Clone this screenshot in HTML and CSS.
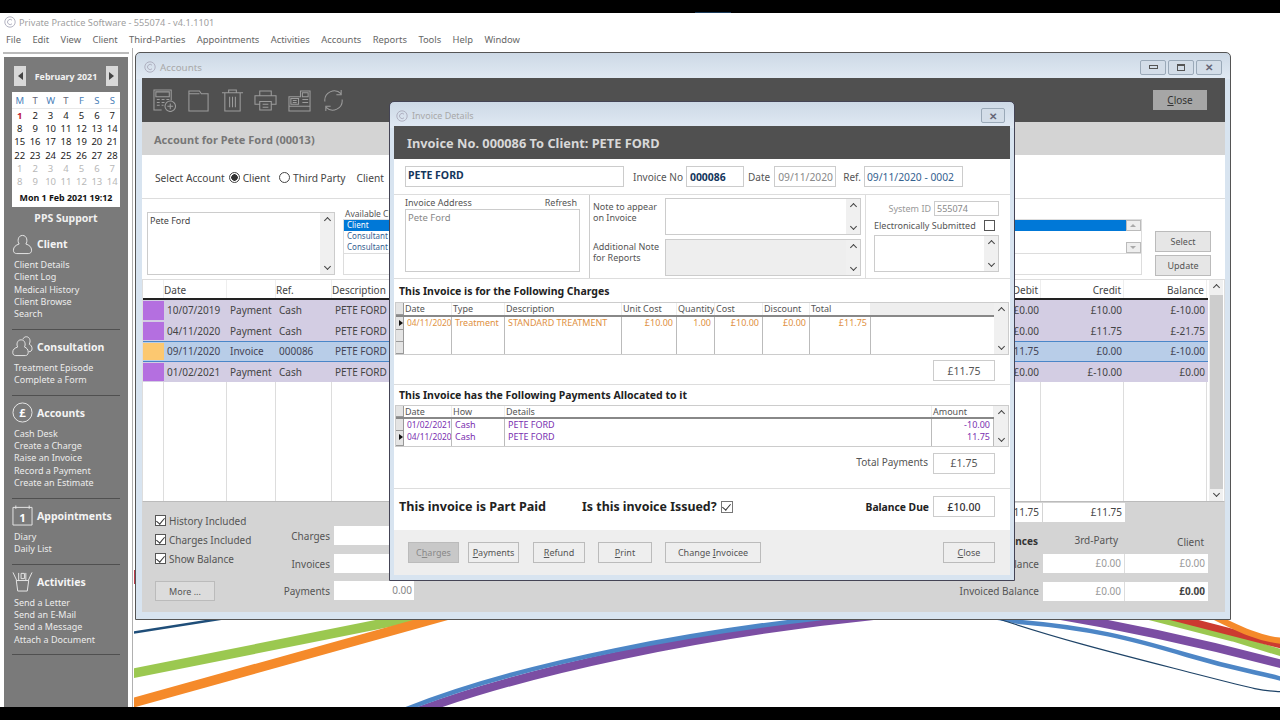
FILE: index.html
```html
<!DOCTYPE html>
<html lang="en">
<head>
<meta charset="utf-8">
<title>Private Practice Software</title>
<link rel="stylesheet" href="styles.css">
</head>
<body>
<div class="blackbar"><span class="blip"></span></div>
<div class="screen">
  <div class="apptitle">
    <svg class="logo" viewBox="0 0 12 12"><circle cx="6" cy="6" r="5.2"/><path d="M8 4.2A2.6 2.6 0 1 0 8 7.8"/></svg>
    <span>Private Practice Software - 555074 - v4.1.1101</span>
  </div>
  <div class="menu">
    <span>File</span><span>Edit</span><span>View</span><span>Client</span><span>Third-Parties</span><span>Appointments</span><span>Activities</span><span>Accounts</span><span>Reports</span><span>Tools</span><span>Help</span><span>Window</span>
  </div>
  <div class="desk">
    <aside class="side">
      <div class="side-in">
        <div class="calnav">
          <span class="navbtn"><i class="tri-l"></i></span>
          <b>February 2021</b>
          <span class="navbtn"><i class="tri-r"></i></span>
        </div>
        <div class="cal">
          <div class="calhead"><span>M</span><span>T</span><span>W</span><span>T</span><span>F</span><span>S</span><span>S</span></div>
          <div class="caldays">
            <span class="red">1</span><span>2</span><span>3</span><span>4</span><span>5</span><span>6</span><span>7</span>
            <span>8</span><span>9</span><span>10</span><span>11</span><span>12</span><span>13</span><span>14</span>
            <span>15</span><span>16</span><span>17</span><span>18</span><span>19</span><span>20</span><span>21</span>
            <span>22</span><span>23</span><span>24</span><span>25</span><span>26</span><span>27</span><span>28</span>
            <span class="off">1</span><span class="off">2</span><span class="off">3</span><span class="off">4</span><span class="off">5</span><span class="off">6</span><span class="off">7</span>
            <span class="off">8</span><span class="off">9</span><span class="off">10</span><span class="off">11</span><span class="off">12</span><span class="off">13</span><span class="off">14</span>
          </div>
          <div class="calfoot">Mon 1 Feb 2021 19:12</div>
        </div>
        <div class="pps">PPS Support</div>
        <section class="sec first">
          <h3><svg viewBox="0 0 22 22"><path d="M7.5 10.5C5.5 8 6 1.500 11 1.500S16.500 8 14.500 10.500C18 11.500 20.500 13.500 20.500 17C20.500 19.500 19 20.500 17 20.500H5C3 20.500 1.500 19.500 1.500 17C1.500 13.500 4 11.500 7.500 10.500Z"/></svg>Client</h3>
          <a>Client Details</a><a>Client Log</a><a>Medical History</a><a>Client Browse</a><a>Search</a>
        </section>
        <section class="sec">
          <h3><svg viewBox="0 0 22 22"><path d="M6 11.500C4.500 9.500 5 4 9.500 4S14.500 9.500 13 11.500C15.500 12.500 17 14 17 17C17 19.500 15.500 20.500 14 20.500H4C2 20.500 .8 19.500 .8 17C.8 14 3 12.500 6 11.500Z"/><path d="M11.500 3.500C12 1.500 13.500 .8 15 .8C19 .8 19.800 6 18 8.500C20 9.500 21 11 21 13.500C21 15.500 19.500 16.500 17.500 16.500"/></svg>Consultation</h3>
          <a>Treatment Episode</a><a>Complete a Form</a>
        </section>
        <section class="sec">
          <h3><svg viewBox="0 0 22 22"><circle cx="11" cy="11" r="10"/><text x="11" y="15.500" text-anchor="middle" class="glyph">£</text></svg>Accounts</h3>
          <a>Cash Desk</a><a>Create a Charge</a><a>Raise an Invoice</a><a>Record a Payment</a><a>Create an Estimate</a>
        </section>
        <section class="sec">
          <h3><svg viewBox="0 0 22 22"><path d="M1 2.500H21V21H1ZM4 .5V4M18 .5V4"/><text x="11" y="17.500" text-anchor="middle" class="glyph">1</text></svg>Appointments</h3>
          <a>Diary</a><a>Daily List</a>
        </section>
        <section class="sec">
          <h3><svg viewBox="0 0 22 22"><path d="M4.500 10H17.500L16 21H6ZM1 1.500L5 10M21 1.500L17 10M7 2V10M9.500 2.500H13V8H9.500ZM14.500 2V10"/></svg>Activities</h3>
          <a>Send a Letter</a><a>Send an E-Mail</a><a>Send a Message</a><a>Attach a Document</a>
        </section>
      </div>
    </aside>

    <main class="canvas">
      <svg class="swoosh" viewBox="134 48 1146 659" preserveAspectRatio="none">
        <rect x="134" y="570" width="2" height="14" fill="#c04050"/>
        <path d="M125 634L245 615" stroke="#1f4e79" stroke-width="2.500" fill="none"/>
        <path d="M125 675L440 612" stroke="#9bc850" stroke-width="9.500" fill="none"/>
        <path d="M125 705L470 609" stroke="#f58a2a" stroke-width="9.500" fill="none"/>
        <path d="M1140 614L1233 638L1285 654" stroke="#9bc850" stroke-width="7" fill="none"/>
        <path d="M1165 615L1285 646" stroke="#cc3a30" stroke-width="7" fill="none"/>
        <path d="M1205 612C1240 630 1262 640 1285 641" stroke="#f58a2a" stroke-width="6" fill="none"/>
        <path d="M408 715C525 670 710 632 880 615C960 610 1000 612 1040 612C1100 622 1180 637 1285 665" stroke="#7b4ea3" stroke-width="8.500" fill="none"/>
        <path d="M392 715C512 664 704 628 880 612C960 608 1000 618 1020 622C1090 628 1130 638 1187 655S1260 672 1285 680" stroke="#4d86c6" stroke-width="4.500" fill="none"/>
        <path d="M990 616C1060 640 1130 657 1200 675S1260 690 1285 692" stroke="#1f4468" stroke-width="1.200" fill="none"/>
      </svg>

      <div class="win acc">
        <div class="wtitle">
          <svg class="logo" viewBox="0 0 12 12"><circle cx="6" cy="6" r="5.2"/><path d="M8 4.200A2.600 2.600 0 1 0 8 7.800"/></svg>
          <span class="wname">Accounts</span>
          <span class="wctl"><span class="wbtn"><i class="ic-min"></i></span><span class="wbtn"><i class="ic-max"></i></span><span class="wbtn x">✕</span></span>
        </div>
        <div class="wbody">
          <div class="toolbar">
            <svg viewBox="0 0 24 24"><path d="M9 22H1V1H19V12"/><path d="M3 3H17V8H3ZM4 11H7M9 11H12M14 11H17M4 14H7M9 14H12M4 17H7M9 17H11"/><circle cx="18" cy="18" r="5.500"/><path d="M18 15V21M15 18H21"/></svg>
            <svg viewBox="0 0 24 24"><path d="M2 2H13L15 5H22V23H2ZM2 5H13"/></svg>
            <svg viewBox="0 0 24 24"><path d="M1 4H23M8 4V1H16V4M4 4V23H20V4M9 8V19M12 8V19M15 8V19"/></svg>
            <svg viewBox="0 0 24 24"><path d="M6 7V2H18V7M6 16H1V7H23V16H18M6 13H18V22H6ZM9 16H15M9 19H15"/></svg>
            <svg viewBox="0 0 24 24"><path d="M1 8H13V2H23V23H1ZM1 18H23M3 10H11V16H3ZM15 4H21V8H15ZM5 12H9M5 14H9M15 11H21M15 14H21"/></svg>
            <svg viewBox="0 0 24 24"><path d="M3 13C2 4 13 -2 20 5M21 11C22 20 11 26 4 19M20 1V6H15M4 23V18H9"/></svg>
            <span class="closebtn"><span><u>C</u>lose</span></span>
          </div>
          <div class="acchead">Account for Pete Ford (00013)</div>
          <div class="selrow">
            <span>Select Account</span>
            <span class="radio on"></span><span>Client</span>
            <span class="radio"></span><span>Third Party</span>
            <span class="sel-client">Client</span>
          </div>
          <div class="addr">
            <div class="box addrbox">
              <div class="boxtext">Pete Ford</div>
              <div class="sb"><i class="up"></i><i class="dn"></i></div>
            </div>
            <div class="avail">
              <div class="avlabel">Available Clients</div>
              <div class="avlist">
                <div class="avrows"><div class="av sel">Client</div><div class="av">Consultant</div><div class="av">Consultant</div></div>
                <div class="avsb"><span class="tri-up"></span><span class="tri-dn"></span></div>
              </div>
              <div class="avextra"></div>
            </div>
            <div class="addrbtns"><span class="btn">Select</span><span class="btn">Update</span></div>
          </div>
          <div class="ledger">
            <div class="ltable">
              <div class="lrow lhead"><span></span><span>Date</span><span></span><span>Ref.</span><span>Description</span><span class="r">Debit</span><span class="r">Credit</span><span class="r">Balance</span></div>
              <div class="lrow pay"><i class="sw"></i><span>10/07/2019</span><span>Payment</span><span>Cash</span><span>PETE FORD</span><span class="r">£0.00</span><span class="r">£10.00</span><span class="r">£-10.00</span></div>
              <div class="lrow pay"><i class="sw"></i><span>04/11/2020</span><span>Payment</span><span>Cash</span><span>PETE FORD</span><span class="r">£0.00</span><span class="r">£11.75</span><span class="r">£-21.75</span></div>
              <div class="lrow cur"><i class="sw inv"></i><span>09/11/2020</span><span>Invoice</span><span>000086</span><span>PETE FORD</span><span class="r">£11.75</span><span class="r">£0.00</span><span class="r">£-10.00</span></div>
              <div class="lrow pay"><i class="sw"></i><span>01/02/2021</span><span>Payment</span><span>Cash</span><span>PETE FORD</span><span class="r">£0.00</span><span class="r">£-10.00</span><span class="r">£0.00</span></div>
              <div class="lrow fill"><span></span><span></span><span></span><span></span><span></span><span></span><span></span><span></span></div>
            </div>
            <div class="lsb"><i class="up"></i><b></b><i class="dn"></i></div>
          </div>
          <div class="foot">
            <div class="fchecks">
              <label class="chk"><i class="cb on"></i>History Included</label>
              <label class="chk"><i class="cb on"></i>Charges Included</label>
              <label class="chk"><i class="cb on"></i>Show Balance</label>
              <span class="btn more">More ...</span>
            </div>
            <div class="fmid">
              <div class="frow"><label>Charges</label><span class="fin"></span></div>
              <div class="frow"><label>Invoices</label><span class="fin"></span></div>
              <div class="frow"><label>Payments</label><span class="fin">0.00</span></div>
            </div>
            <div class="fright">
              <div class="ftot"><span class="fin strong">£11.75</span><span class="fin strong">£11.75</span></div>
              <div class="fhdr"><b>Balances</b><span class="th">3rd-Party</span><span class="th low">Client</span></div>
              <div class="frow"><label>Balance</label><span class="fin grey">£0.00</span><span class="fin grey">£0.00</span></div>
              <div class="frow"><label>Invoiced Balance</label><span class="fin grey">£0.00</span><span class="fin strong"><b>£0.00</b></span></div>
            </div>
          </div>
        </div>
      </div>

      <div class="win dlg">
        <div class="wtitle dt">
          <svg class="logo" viewBox="0 0 12 12"><circle cx="6" cy="6" r="5.200"/><path d="M8 4.200A2.600 2.600 0 1 0 8 7.800"/></svg>
          <span class="wname small">Invoice Details</span>
          <span class="wctl"><span class="wbtn x">✕</span></span>
        </div>
        <div class="wbody">
          <div class="dhead">Invoice No. 000086 To Client: PETE FORD</div>
          <div class="drow1">
            <span class="inp name">PETE FORD</span>
            <label>Invoice No</label><span class="inp invno">000086</span>
            <label>Date</label><span class="inp date">09/11/2020</span>
            <label>Ref.</label><span class="inp ref">09/11/2020 - 0002</span>
          </div>
          <div class="drow2">
            <div class="dcol a">
              <div class="alabel"><span>Invoice Address</span><span>Refresh</span></div>
              <div class="inp aaddr">Pete Ford</div>
            </div>
            <div class="dcol b">
              <div class="note"><label>Note to appear<br>on Invoice</label><div class="inp nbox"><div class="sb"><i class="up"></i><i class="dn"></i></div></div></div>
              <div class="note two"><label>Additional Note<br>for Reports</label><div class="inp nbox dis"><div class="sb"><i class="up"></i><i class="dn"></i></div></div></div>
            </div>
            <div class="dcol c">
              <div class="sysrow"><label>System ID</label><span class="inp sysid">555074</span></div>
              <div class="elec"><label>Electronically Submitted</label><i class="cb"></i></div>
              <div class="inp ebox"><div class="sb"><i class="up"></i><i class="dn"></i></div></div>
            </div>
          </div>
          <h4 class="dsec">This Invoice is for the Following Charges</h4>
          <div class="dg g1">
            <div class="dgmain">
              <div class="dr hd"><i class="rs"></i><span>Date</span><span>Type</span><span>Description</span><span>Unit Cost</span><span>Quantity</span><span>Cost</span><span>Discount</span><span>Total</span><em></em></div>
              <div class="dr or"><i class="rs ptr"></i><span>04/11/2020</span><span>Treatment</span><span>STANDARD TREATMENT</span><span class="r">£10.00</span><span class="r">1.00</span><span class="r">£10.00</span><span class="r">£0.00</span><span class="r">£11.75</span><em></em></div>
              <div class="dr"><i class="rs"></i><span></span><span></span><span></span><span></span><span></span><span></span><span></span><span></span><em></em></div>
              <div class="dr"><i class="rs"></i><span></span><span></span><span></span><span></span><span></span><span></span><span></span><span></span><em></em></div>
            </div>
            <div class="sb"><i class="up"></i><i class="dn"></i></div>
          </div>
          <div class="dtotal one"><span class="inp amt">£11.75</span></div>
          <h4 class="dsec two">This Invoice has the Following Payments Allocated to it</h4>
          <div class="dg g2">
            <div class="dgmain">
              <div class="dr hd"><i class="rs"></i><span>Date</span><span>How</span><span>Details</span><span>Amount</span></div>
              <div class="dr pu"><i class="rs"></i><span>01/02/2021</span><span>Cash</span><span>PETE FORD</span><span class="r">-10.00</span></div>
              <div class="dr pu"><i class="rs ptr"></i><span>04/11/2020</span><span>Cash</span><span>PETE FORD</span><span class="r">11.75</span></div>
            </div>
            <div class="sb"><i class="up"></i><i class="dn"></i></div>
          </div>
          <div class="dtotal pays"><label>Total Payments</label><span class="inp amt">£1.75</span></div>
          <div class="dstatus">
            <b class="paid">This invoice is Part Paid</b>
            <b class="issued">Is this invoice Issued?</b><i class="cb on small"></i>
            <b class="due">Balance Due</b><span class="inp amt strong">£10.00</span>
          </div>
          <div class="dbar">
            <span class="btn off w51"><span>C<u>h</u>arges</span></span>
            <span class="btn w51 ml9"><span><u>P</u>ayments</span></span>
            <span class="btn w52 ml14"><span><u>R</u>efund</span></span>
            <span class="btn w54 ml13"><span><u>P</u>rint</span></span>
            <span class="btn w96 ml13"><span>Change <u>I</u>nvoicee</span></span>
            <span class="btn w52 last"><span><u>C</u>lose</span></span>
          </div>
        </div>
      </div>
    </main>
  </div>
</div>
<div class="blackbar"></div>
</body>
</html>
```
FILE: styles.css
```css
*{box-sizing:border-box}
html,body{margin:0;height:720px;overflow:hidden;background:#000}
body{font-family:"Noto Sans","Open Sans",sans-serif;font-size:10px;color:#555;display:flex;flex-direction:column}
.blackbar{height:13px;background:#000;position:relative;flex:none}
.blip{display:block;position:absolute;left:695px;bottom:0;width:36px;height:1px;background:#1a3a5a}
.screen{height:694px;background:#fff;display:flex;flex-direction:column;flex:none}
.apptitle{height:18px;display:flex;align-items:center;gap:3px;padding-left:4px;color:#a0a0a0;font-size:9.2px;flex:none}
.logo{width:12px;height:12px;fill:none;stroke:#aab;stroke-width:.9;flex:none}
.menu{height:17px;display:flex;gap:11.4px;padding-left:6px;align-items:center;color:#666;font-size:9.4px;flex:none}
.desk{flex:1;display:flex;min-height:0}

/* sidebar */
.side{width:133px;padding:5px 4px 0;border-right:1px solid #b0b0b0;flex:none;position:relative;margin-right:-3px;border-top:0}
.side::before{content:"";display:block;height:2px;background:#bbb;margin:-1px -1px 3px}
.side-in{background:#7a7a7a;height:100%;width:124px;padding:0 8px;color:#eee}
.calnav{display:flex;align-items:center;justify-content:space-between;padding:9px 2px 6px;height:35px}
.calnav b{color:#f2f2f2;font-size:8.9px}
.navbtn{width:12px;height:20px;background:#d8d8d8;display:flex;align-items:center;justify-content:center}
.tri-l,.tri-r{width:0;height:0;border:4px solid transparent}
.tri-l{border-right:5px solid #444;border-left:0}
.tri-r{border-left:5px solid #444;border-right:0}
.cal{background:#fff;width:108px;height:115px;color:#222;font-size:9.5px}
.calhead{display:grid;grid-template-columns:repeat(7,1fr);height:17px;align-items:center;text-align:center;color:#4a80b8;border-bottom:1px solid #e8e8e8}
.calhead span:nth-child(2),.calhead span:nth-child(4){color:#667}
.caldays{display:grid;grid-template-columns:repeat(7,1fr);grid-auto-rows:13.2px;text-align:center;line-height:13px}
.red{color:#c0203a;font-weight:700}
.off{color:#b8b8b8}
.calfoot{font-weight:700;font-size:8.9px;text-align:center;height:19px;line-height:19px;color:#111}
.pps{color:#f0f0f0;font-weight:700;font-size:10.5px;text-align:center;height:26px;line-height:22px}
.sec{border-bottom:1px solid #505050;padding:6px 0 8.400px;margin:0;width:108px;box-sizing:content-box}
.sec.first{padding-top:0;border-bottom-width:1px}
.sec h3{margin:0 0 4px;height:22px;display:flex;align-items:center;gap:4px;color:#f4f4f4;font-size:10.5px;font-weight:700}
.sec svg{width:21px;height:21px;fill:none;stroke:#e8e8e8;stroke-width:1;flex:none}
.glyph{font-size:12px;font-weight:700;fill:#fff;stroke:none}
.sec a{display:block;font-size:9px;line-height:12.300px;color:#ececec;padding-left:2px}

/* canvas */
.canvas{flex:1;position:relative;min-width:0}
.swoosh{position:absolute;left:4px;top:0;width:1146px;height:100%}
.win{position:absolute;background:linear-gradient(#cdd9e6,#e0e9f3 26px,#d8e4f0 26px);border:1px solid #555;border-bottom-width:1px;border-radius:5px 5px 0 0;display:flex;flex-direction:column}
.acc{left:5px;top:4px;width:1096px;height:568px;padding:0 5px 7px 6px}
.dlg{left:259px;top:53px;width:626px;height:480px;padding:0 4px 5px;border-color:#445;z-index:2}
.wtitle{height:25px;display:flex;align-items:center;gap:4px;padding:3px 0 0 2px;flex:none}
.dt{height:24px}
.wname{color:#a8a8a8;font-size:9.800px}
.wname.small{font-size:9px}
.wctl{margin-left:auto;display:flex;gap:2px;padding-right:3px}
.wbtn{width:26px;height:15px;border:1px solid #9aa9b8;background:#d3dde8;border-radius:2px;display:flex;align-items:center;justify-content:center;color:#667;font-size:10px;font-weight:700}
.wbtn.x{width:26px}
.dt .wctl{padding-right:5px}
.dt .wbtn.x{width:24px}
.ic-min{width:9px;height:4px;border:1px solid #555}
.ic-max{width:8px;height:7px;border:1px solid #555;border-top-width:2px}
.wbody{flex:1;background:#fff;display:flex;flex-direction:column;min-height:0}

/* accounts */
.toolbar{height:44px;background:#505050;display:flex;align-items:center;padding-left:11px;gap:10.800px;flex:none}
.toolbar svg{width:23px;height:23px;fill:none;stroke:#9c9c9c;stroke-width:1.100;flex:none}
.closebtn{margin-left:auto;margin-right:18px;width:54px;height:20px;background:#a6a6a6;color:#333;font-size:10px;display:flex;align-items:center;justify-content:center}
.acchead{height:33px;background:#d4d4d4;color:#777;font-weight:700;font-size:11px;line-height:36px;padding-left:12px;flex:none}
.selrow{height:44px;display:flex;align-items:center;padding:2px 0 0 13px;border-bottom:1px solid #ddd;font-size:10.200px;flex:none;color:#444}
.radio{width:11px;height:11px;border:1px solid #444;border-radius:50%;margin:0 3px 0 4px;background:#fff;flex:none}
.radio+span+.radio{margin-left:9px}
.radio.on{background:radial-gradient(circle,#333 3px,#fff 3.500px)}
.sel-client{margin-left:11px}
.addr{height:80px;display:flex;flex:none;position:relative}
.box{border:1px solid #ccc;background:#fff;display:flex}
.addrbox{width:188px;height:63px;margin:13px 0 0 5px}
.boxtext{flex:1;padding:1px 2px;font-size:9px;color:#444}
.sb{width:14px;background:#f0f0f0;display:flex;flex-direction:column;justify-content:space-between;align-items:center;padding:5px 0;flex:none}
.up,.dn{display:block;width:5px;height:5px;border:solid #444;border-width:1.200px 0 0 1.200px;transform:rotate(45deg);flex:none}
.dn{transform:rotate(225deg)}
.avail{margin-left:8px;width:799px;padding-top:9px}
.avlabel{font-size:8.500px;height:11px;line-height:11px;color:#555;padding-left:2px}
.avlist{height:35px;border:1px solid #ddd;display:flex}
.avrows{flex:1;padding-top:0;font-size:8px;line-height:10.800px;color:#35618f}
.av{padding-left:3px;height:10.800px}
.av.sel{background:#0078d7;color:#fff}
.avsb{width:15px;display:flex;flex-direction:column;justify-content:space-between;background:#fff}
.avsb span{height:11px;background:#eee;border:1px solid #bbb;position:relative}
.tri-up::after,.tri-dn::after{content:"";position:absolute;left:3px;top:3px;border:3.500px solid transparent}
.tri-up::after{border-bottom:3.500px solid #aaa;border-top:0}
.tri-dn::after{border-top:3.500px solid #aaa;border-bottom:0}
.avextra{height:21px;border:1px solid #ddd;border-top:0}
.addrbtns{margin-left:13px;padding-top:32px;display:flex;flex-direction:column;gap:3px}
.btn{background:#e6e6e6;border:1px solid #bbb;display:flex;align-items:center;justify-content:center;color:#555;font-size:9px;height:21px;flex:none}
.addrbtns .btn{width:56px}
.ledger{height:223px;display:flex;border:1px solid #ddd;border-bottom:1px solid #bbb;flex:none;margin-top:0}
.ltable{flex:1;display:flex;flex-direction:column;min-width:0}
.lrow{display:grid;grid-template-columns:21px 63px 49px 56px 628px 81px 83px 83px;height:20.600px;font-size:10px;line-height:20px;color:#444;flex:none}
.lrow>span{padding:0 3px;white-space:nowrap;overflow:hidden}
.lrow .r{text-align:right;padding-right:2px}
.lhead{height:20px;border-bottom:2px solid #222;background:#fff}
.lhead>span{border-right:1px solid #eee;padding-left:0}
.pay{background:#d3cde3}
.cur{background:#b8cde8;border:solid #4a86c8;border-width:1px 0;line-height:18px;height:20.600px}
.cur>span{color:#445}
.sw{background:#b46fe0;margin:1px 0;display:block}
.sw.inv{background:#fcc870}
.fill{flex:1}
.fill>span{border-right:1px solid #ddd}
.lsb{width:14px;margin:0 1px 0 1px;display:flex;flex-direction:column;align-items:center;padding-top:5px;background:#f0f0f0;flex:none}
.lsb b{flex:1;width:13px;background:#cdcdcd;margin:5px 0 2px}
.lsb .dn{margin-bottom:5px}
.foot{flex:1;background:#d4d4d4;display:flex;font-size:10px;color:#555;min-height:0}
.fchecks{width:142px;padding:9px 0 0 13px;display:flex;flex-direction:column}
.chk{display:flex;align-items:center;gap:3px;height:19px;flex:none}
.cb{width:11px;height:11px;border:1px solid #555;background:#fff;position:relative;flex:none;display:block}
.cb.on::after{content:"";position:absolute;left:2px;top:0;width:4px;height:7px;border:solid #333;border-width:0 1.200px 1.200px 0;transform:rotate(40deg)}
.more{width:60px;height:20px;margin-top:13px;background:#dcdcdc}
.fmid{width:130px;padding-top:24px;display:flex;flex-direction:column;gap:9px}
.frow{display:flex;align-items:center;justify-content:flex-end;gap:4px}
.fmid .frow{height:19px}
.fmid .frow:last-child{margin-top:-1px}
.fin{background:#fff;height:19px;width:81px;text-align:right;padding:0 3px;line-height:19px;color:#888;flex:none;display:block}
.fmid .fin{width:80px;padding-right:2px}
.fin.grey{color:#999}
.fin.strong{color:#444}
.fright{margin-left:auto;width:247px;padding-right:17px;display:flex;flex-direction:column;align-items:flex-end}
.ftot{display:flex;width:165px;margin-right:83px;height:20px;gap:1px;padding-top:1px}
.ftot .fin{width:82px}
.fhdr{display:flex;width:232px;height:32px;align-items:flex-end;padding-bottom:6px;position:relative}
.fhdr b{width:63px;text-align:right;color:#333;overflow:hidden;padding-right:1px;white-space:nowrap;direction:rtl}
.th{width:82px;text-align:right;padding-right:3px;margin-bottom:1px}
.th.low{margin-bottom:-1px;padding-right:2px;width:85px}
.fright .frow{gap:0;margin-bottom:8.500px;height:19px;white-space:nowrap}
.fright .frow label{margin-right:4px}
.fright .frow .fin{width:82px;border-right:1px solid #ddd}
.fright .frow .fin+.fin{width:83px;border-right:0}

/* dialog */
.dhead{height:33px;background:#505050;color:#d8d8d8;font-weight:700;font-size:12.800px;line-height:34px;padding-left:13px;flex:none}
.drow1{height:36px;border-bottom:1px solid #ddd;display:flex;align-items:center;padding-left:11px;flex:none;color:#555;font-size:10px}
.inp{border:1px solid #ccc;background:#fff;display:flex;align-items:center;padding:0 2px;color:#888;font-size:9.500px;flex:none}
.name{width:219px;height:21px;color:#14365c;font-weight:700;font-size:10.500px;margin-right:9px;padding-bottom:3px}
.invno{width:58px;height:21px;color:#14365c;font-weight:700;font-size:10.400px;margin:0 4px 0 3px;padding-left:3px}
.date{width:62px;height:21px;margin:0 7px 0 4px;font-size:10.300px;padding-left:3px}
.ref{width:99px;height:21px;margin-left:3px;color:#35618f;font-size:10.300px}
.drow2{height:84px;display:flex;border-bottom:1px solid #ddd;flex:none;font-size:9px}
.dcol{display:flex;flex-direction:column}
.dcol.a{width:196px;padding:2px 10px 0 11px;border-right:1px solid #ccc}
.alabel{display:flex;justify-content:space-between;height:12px;line-height:12px;padding-right:2px}
.aaddr{width:175px;height:63px;align-items:flex-start;padding:1px 2px}
.dcol.b{width:276px;padding:3px 0 0;border-right:1px solid #ddd;gap:4px}
.note{display:flex;height:37px;line-height:11px}
.note label{width:75px;padding:3px 0 0 3px}
.note.two label{padding-top:2px}
.nbox{width:196px;height:37px;justify-content:flex-end;padding:0;align-items:stretch}
.nbox.dis{background:#eee}
.dcol.c{flex:1;padding:6px 11px 0 7px}
.sysrow{display:flex;justify-content:flex-end;align-items:center;gap:3px;height:15px;color:#999}
.sysid{width:65px;height:15px;font-size:9px}
.elec{display:flex;justify-content:space-between;align-items:center;height:18px;padding:0 4px 0 1px;color:#555}
.ebox{width:125px;height:37px;margin:1px 0 0 1px;justify-content:flex-end;padding:0;align-items:stretch}
.dsec{margin:0;height:23px;line-height:24px;font-size:10.500px;color:#222;padding-left:5px;flex:none}
.dsec.two{height:20px;line-height:21px}
.dg{margin:0 1px;border:1px solid #ccc;display:flex;flex:none;font-size:9px}
.g1{height:53px}
.g2{height:42px}
.dgmain{flex:1;display:flex;flex-direction:column;min-width:0}
.dr{display:grid;height:12.500px;line-height:12px;flex:none;white-space:nowrap}
.g1 .dr{grid-template-columns:8px 48px 53px 117px 55px 38px 48px 47px 61px 1fr}
.g2 .dr{grid-template-columns:8px 48px 53px 427px 1fr}
.dr>span{border-right:1px solid #bbb;padding-left:3px;overflow:hidden}
.dr .r{text-align:right;padding-right:3px}
.dr:not(.hd)>span:nth-child(2){font-size:8.400px;padding-left:3px}
.dr.hd{height:14px;border-bottom:2px solid #888;color:#555}
.g2 .dr{height:12px}
.g2 .dr.hd{height:13px}
.dr.hd>span{border-right:1px solid #eee;padding-left:1px}
.g1 .dr.hd em{background:#eee}
.rs{background:#e4e4e4;border:solid #999;border-width:0 1px 1px 0;display:block;position:relative}
.ptr::after{content:"";position:absolute;left:3px;top:3px;border:solid transparent;border-width:3px 0 3px 4px;border-left-color:#111}
.or{color:#e0913f}
.pu{color:#7a2fb0}
.g1 .dr:last-child{flex:1}
.g2 .dr:last-child{flex:1}
.dtotal{display:flex;justify-content:flex-end;align-items:center;padding-right:15px;flex:none;gap:5px}
.dtotal.one{height:30px;border-bottom:1px solid #ddd;padding-top:2px}
.dtotal.pays{height:42px;border-bottom:1px solid #ddd;font-size:10px;padding-bottom:9px}
.dtotal.pays label{margin-bottom:3px}
.amt{width:62px;height:21px;justify-content:center;color:#555;font-size:10.500px}
.amt.strong{color:#333;font-weight:500}
.dstatus{height:41px;display:flex;align-items:center;padding:0 15px 6px 5px;flex:none;color:#222;font-size:12.600px}
.paid{width:183px}
.issued{margin-right:4px;font-size:12.400px}
.cb.small{width:12px;height:12px;border-color:#777}
.due{margin-left:auto;margin-right:4px;font-size:10.300px}
.dbar{flex:1;background:#eee;display:flex;align-items:center;padding:0 15px 0 14px;min-height:0}
.dbar .btn{background:#eee;height:21px;border-color:#bbb}
.dbar .btn.off{background:#c8c8c8;color:#888}
.w51{width:51px}.w52{width:52px}.w54{width:54px}.w96{width:96px}
.ml9{margin-left:9px}.ml14{margin-left:14px}.ml13{margin-left:13px}
.last{margin-left:auto}
```
